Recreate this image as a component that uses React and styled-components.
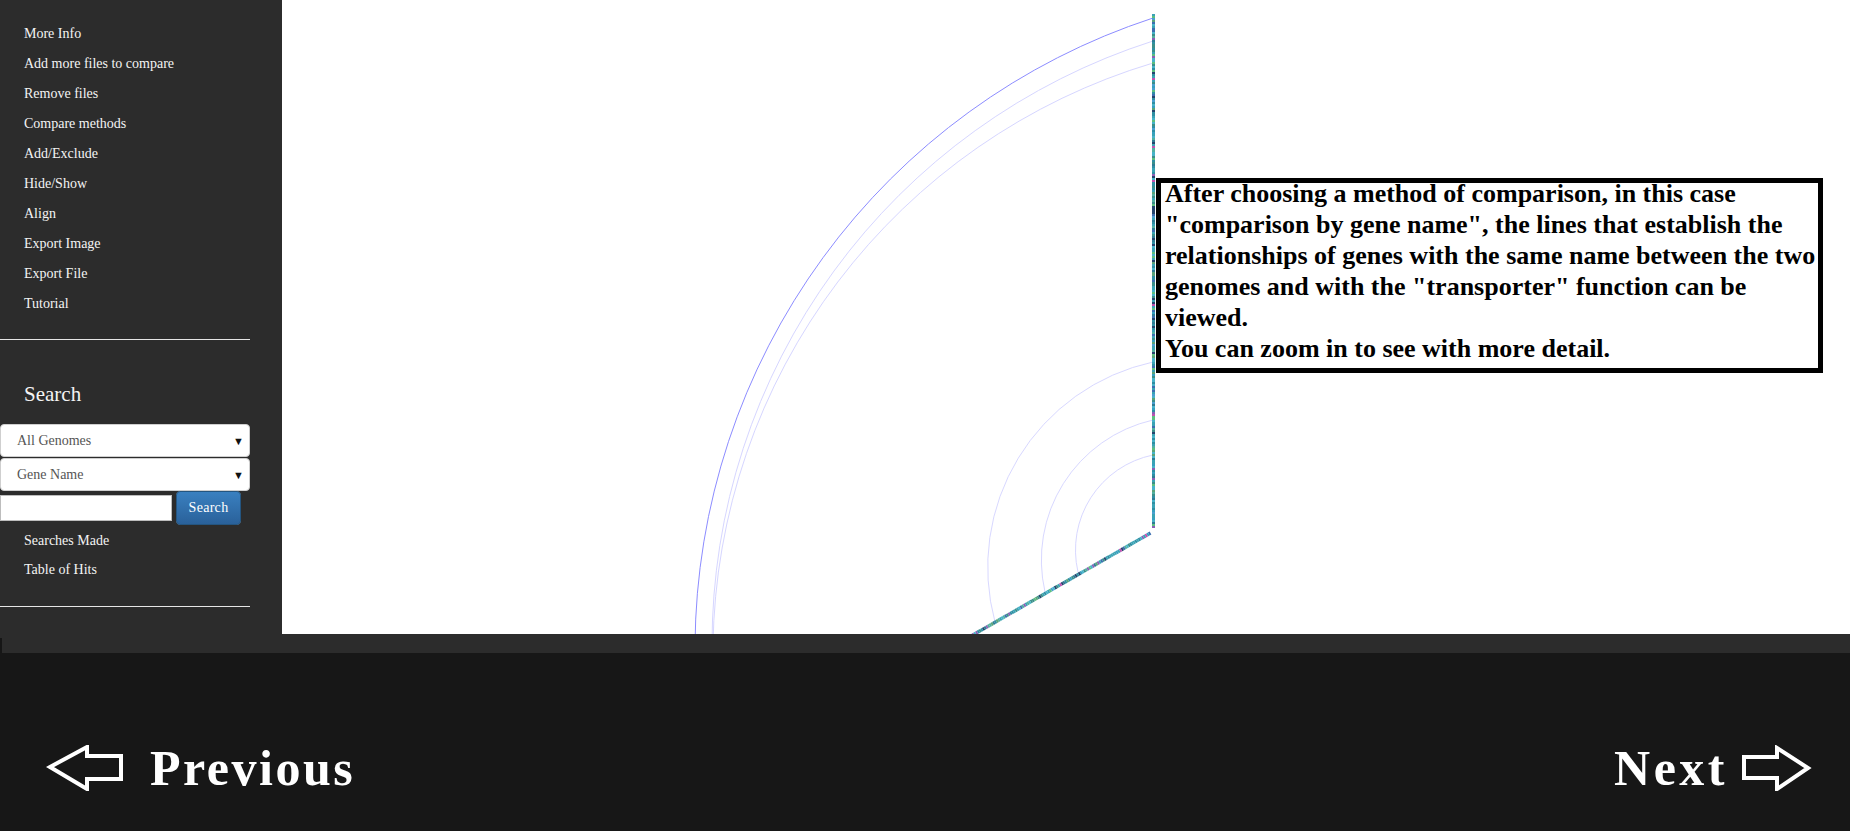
import React from "react";
import styled, { createGlobalStyle } from "styled-components";

const GlobalStyle = createGlobalStyle`
  html, body {
    margin: 0;
    padding: 0;
    background: #171717;
  }
  body {
    font-family: "Liberation Serif", "Times New Roman", serif;
  }
`;

const Page = styled.div`
  display: flex;
  flex-direction: column;
  width: 100%;
  height: 831px;
  overflow: hidden;
`;

const Workspace = styled.div`
  display: flex;
  height: 634px;
  flex-shrink: 0;
`;

const Sidebar = styled.aside`
  width: 282px;
  flex-shrink: 0;
  box-sizing: border-box;
  padding-top: 19px;
  background: #2c2c2c;
`;

const MenuList = styled.ul`
  list-style: none;
  margin: ${(p) => p.$top || 0}px 0 0 0;
  padding: 0;
`;

const MenuItem = styled.li`
  height: ${(p) => p.$h || 30}px;
  line-height: ${(p) => p.$h || 30}px;
  padding-left: 24px;
  font-size: 14px;
  color: #f4f4f4;
  white-space: nowrap;
  cursor: pointer;
`;

const Divider = styled.hr`
  width: 250px;
  height: 0;
  margin: ${(p) => p.$top}px 0 0 0;
  border: 0;
  border-top: 1px solid #e6e6e6;
`;

const SectionTitle = styled.h3`
  margin: 39px 0 0 0;
  padding-left: 24px;
  font-size: 21px;
  font-weight: normal;
  line-height: 30px;
  color: #f4f4f4;
`;

const SelectBox = styled.div`
  display: flex;
  align-items: center;
  justify-content: space-between;
  width: 250px;
  height: 33px;
  margin-top: ${(p) => p.$top}px;
  box-sizing: border-box;
  padding: 0 5px 0 16px;
  background: #fff;
  border: 1px solid #cfcfcf;
  border-radius: 4px;
  font-size: 14px;
  color: #555;
`;

const Caret = styled.span`
  font-size: 11px;
  color: #111;
`;

const SearchRow = styled.div`
  display: flex;
  align-items: center;
  gap: 4px;
  width: 250px;
`;

const TextInput = styled.input`
  width: 172px;
  height: 26px;
  margin: 0;
  padding: 0 4px;
  box-sizing: border-box;
  border: 1px solid #bdbdbd;
  background: #fff;
  font-family: inherit;
`;

const SearchButton = styled.button`
  width: 65px;
  height: 34px;
  padding: 0;
  border: 1px solid #245580;
  border-radius: 4px;
  background-image: linear-gradient(to bottom, #3a80c0 0%, #2a619a 100%);
  color: #fff;
  font-family: inherit;
  font-size: 14px;
  letter-spacing: 0.3px;
`;

const Canvas = styled.main`
  position: relative;
  flex: 1;
  background: #fff;
  overflow: hidden;
`;

const Diagram = styled.svg`
  display: block;
  width: 100%;
  height: 100%;
`;

const InfoBox = styled.div`
  position: absolute;
  left: 874px;
  top: 178px;
  width: 667px;
  height: 195px;
  box-sizing: border-box;
  padding-left: 4px;
  border: 5px solid #000;
  background: #fff;
  overflow: hidden;
`;

const InfoText = styled.div`
  margin-top: -5px;
  font-size: 26px;
  font-weight: bold;
  line-height: 31px;
  color: #000;
  white-space: nowrap;
`;

const Strip = styled.div`
  height: 19px;
  flex-shrink: 0;
  background: #2c2c2c;

  &::before {
    content: "";
    display: block;
    width: 2px;
    height: 15px;
    margin-top: 4px;
    background: #161616;
  }
`;

const Footer = styled.footer`
  display: flex;
  justify-content: space-between;
  align-items: flex-start;
  height: 178px;
  flex-shrink: 0;
  box-sizing: border-box;
  padding: 91px 37px 0 46px;
  background: #171717;
`;

const NavLink = styled.div`
  display: flex;
  align-items: center;
  gap: ${(p) => p.$gap}px;
  height: 48px;
  font-size: 50px;
  font-weight: bold;
  line-height: 48px;
  letter-spacing: ${(p) => p.$spacing}px;
  color: #fff;
  cursor: pointer;
`;

// genome tracks: noisy coloured strips
const palette = [
  "#3aa3b5", "#2f8fa3", "#47b3c9", "#3b8f8a", "#5aa37a", "#2e7c95",
  "#4a9fd0", "#3aa3b5", "#2f8fa3", "#36a0c0", "#3aa3b5", "#47b3c9",
  "#2f8fa3", "#52b0a0", "#47b3c9", "#3b8f8a", "#3c6fb0", "#8a5fb5",
  "#c04fb0", "#24456e", "#5cbf80", "#3aa3b5",
];
let seed = 7;
const rand = () => {
  seed = (seed * 16807) % 2147483647;
  return seed / 2147483647;
};
const pick = () => palette[Math.floor(rand() * palette.length)];

const barCells = Array.from({ length: 257 }, (_, i) => ({ y: 14 + i * 2, c: pick() }));

const diagStart = [1150.5, 533];
const diagEnd = [945, 651];
const diagCells = Array.from({ length: 120 }, (_, i) => {
  const t0 = i / 120;
  const t1 = (i + 1) / 120;
  return {
    x1: diagStart[0] + (diagEnd[0] - diagStart[0]) * t0,
    y1: diagStart[1] + (diagEnd[1] - diagStart[1]) * t0,
    x2: diagStart[0] + (diagEnd[0] - diagStart[0]) * t1,
    y2: diagStart[1] + (diagEnd[1] - diagStart[1]) * t1,
    c: pick(),
  };
});

const arcs = [
  { d: "M1153,18 A665,665 0 0 0 695,645", c: "#8c8cff" },
  { d: "M1153,41 A634,634 0 0 0 712,645", c: "#d6d6ff" },
  { d: "M1153,63 A617,617 0 0 0 713,645", c: "#d6d6ff" },
  { d: "M1153,362 A210,210 0 0 0 995,622", c: "#d8d8ff" },
  { d: "M1153,420 A143.5,143.5 0 0 0 1045,592", c: "#d8d8ff" },
  { d: "M1153,455 A97,97 0 0 0 1078,572", c: "#d8d8ff" },
];

function GenomeDiagram() {
  return (
    <Diagram viewBox="282 0 1568 634" preserveAspectRatio="xMinYMin slice">
      {arcs.map((a, i) => (
        <path key={i} d={a.d} fill="none" stroke={a.c} strokeWidth="1" />
      ))}
      {diagCells.map((s, i) => (
        <line key={i} x1={s.x1} y1={s.y1} x2={s.x2} y2={s.y2} stroke={s.c} strokeWidth="3.4" />
      ))}
      {barCells.map((b, i) => (
        <rect key={i} x="1152" y={b.y} width="3" height="2" fill={b.c} />
      ))}
    </Diagram>
  );
}

function LeftArrow() {
  return (
    <svg width="78" height="46" viewBox="0 0 78 46">
      <polygon
        points="4,22 41,2 41,11 75,11 75,34 41,34 41,44"
        fill="none"
        stroke="#fff"
        strokeWidth="4"
      />
    </svg>
  );
}

function RightArrow() {
  return (
    <svg width="72" height="46" viewBox="0 0 72 46">
      <polygon
        points="3,12 36,12 36,3 67,23 36,44 36,33 3,33"
        fill="none"
        stroke="#fff"
        strokeWidth="4"
      />
    </svg>
  );
}

const menu = [
  "More Info",
  "Add more files to compare",
  "Remove files",
  "Compare methods",
  "Add/Exclude",
  "Hide/Show",
  "Align",
  "Export Image",
  "Export File",
  "Tutorial",
];

export default function App() {
  return (
    <Page>
      <GlobalStyle />
      <Workspace>
        <Sidebar>
          <MenuList>
            {menu.map((m) => (
              <MenuItem key={m}>{m}</MenuItem>
            ))}
          </MenuList>
          <Divider $top={20} />
          <SectionTitle>Search</SectionTitle>
          <SelectBox $top={15}>
            All Genomes <Caret>▼</Caret>
          </SelectBox>
          <SelectBox $top={1}>
            Gene Name <Caret>▼</Caret>
          </SelectBox>
          <SearchRow>
            <TextInput type="text" />
            <SearchButton>Search</SearchButton>
          </SearchRow>
          <MenuList $top={1}>
            <MenuItem $h={29}>Searches Made</MenuItem>
            <MenuItem $h={29}>Table of Hits</MenuItem>
          </MenuList>
          <Divider $top={22} />
        </Sidebar>
        <Canvas>
          <GenomeDiagram />
          <InfoBox>
            <InfoText>
              After choosing a method of comparison, in this case
              <br />
              "comparison by gene name", the lines that establish the
              <br />
              relationships of genes with the same name between the two
              <br />
              genomes and with the "transporter" function can be
              <br />
              viewed.
              <br />
              You can zoom in to see with more detail.
            </InfoText>
          </InfoBox>
        </Canvas>
      </Workspace>
      <Strip />
      <Footer>
        <NavLink $gap={26} $spacing={2.5}>
          <LeftArrow />
          Previous
        </NavLink>
        <NavLink $gap={13} $spacing={3.5}>
          Next
          <RightArrow />
        </NavLink>
      </Footer>
    </Page>
  );
}
